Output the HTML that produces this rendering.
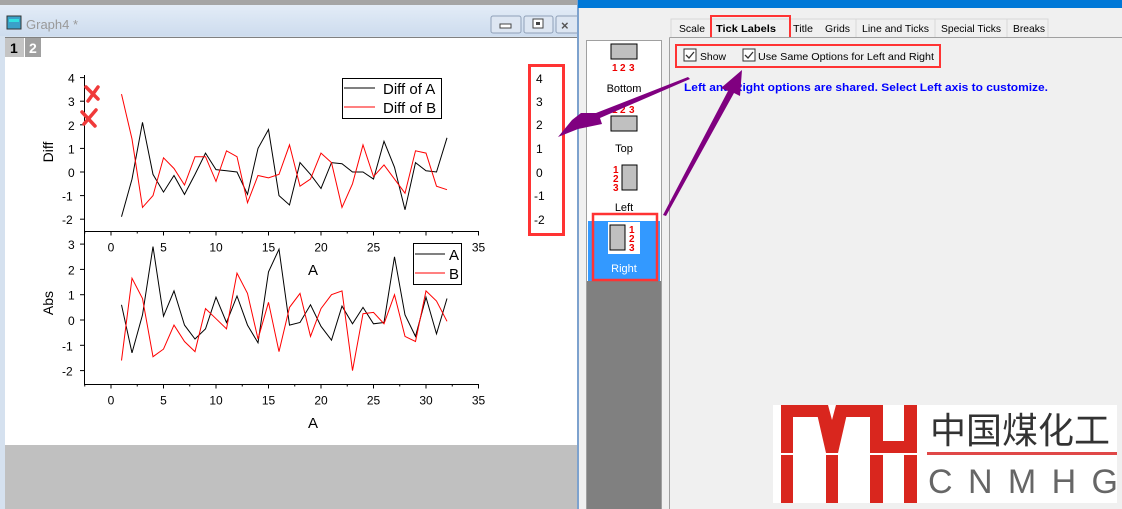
<!DOCTYPE html>
<html><head><meta charset="utf-8"><style>
html,body{margin:0;padding:0;width:1122px;height:509px;overflow:hidden;background:#f0f0f0;font-family:"Liberation Sans",sans-serif}
svg{position:absolute;left:0;top:0}
</style></head><body>
<svg width="1122" height="509" viewBox="0 0 1122 509" xmlns="http://www.w3.org/2000/svg" font-family="Liberation Sans, sans-serif">
<rect x="0" y="0" width="580" height="509" fill="#d5e1ef"/>
<rect x="0" y="0" width="580" height="5" fill="#a5a5a5"/>
<defs><linearGradient id="tb" x1="0" y1="0" x2="0" y2="1"><stop offset="0" stop-color="#e3ecf7"/><stop offset="1" stop-color="#cddcee"/></linearGradient></defs>
<rect x="0" y="5" width="580" height="31" fill="url(#tb)"/>
<rect x="7" y="16" width="14" height="13" fill="#3aa0c8" stroke="#333" stroke-width="1"/>
<rect x="9" y="19" width="10" height="3" fill="#30e0e0"/>
<text x="26" y="29" font-size="13" fill="#999">Graph4 *</text>
<rect x="491" y="16" width="30" height="17" rx="2" fill="#dde6f2" stroke="#8fa0b8"/>
<rect x="500" y="24" width="11" height="4" fill="#fff" stroke="#444"/>
<rect x="524" y="16" width="29" height="17" rx="2" fill="#dde6f2" stroke="#8fa0b8"/>
<rect x="533" y="19" width="10" height="9" fill="#fff" stroke="#444"/>
<rect x="536" y="22" width="4" height="3" fill="#444"/>
<rect x="556" y="16" width="24" height="17" rx="2" fill="#dde6f2" stroke="#8fa0b8"/>
<text x="561" y="30" font-size="13" font-weight="bold" fill="#555">×</text>
<rect x="5" y="37" width="573" height="408" fill="#fff"/>
<rect x="5" y="445" width="573" height="64" fill="#c0c0c0"/>
<rect x="5" y="37" width="573" height="1" fill="#808080"/>
<rect x="5" y="38" width="19" height="19" fill="#c4c4c4"/>
<text x="10" y="53" font-size="14" font-weight="bold" fill="#000">1</text>
<rect x="25" y="38" width="16" height="19" fill="#a0a0a0"/>
<text x="29" y="53" font-size="14" font-weight="bold" fill="#fff">2</text>

<g id="plots" font-size="12" fill="#000"></g>

<g stroke="#f03a3a" stroke-width="3.5" stroke-linecap="round">
<line x1="86" y1="87" x2="98" y2="99"/><line x1="98" y1="87" x2="88" y2="101"/>
<line x1="82" y1="112" x2="95" y2="126"/><line x1="96" y1="110" x2="84" y2="124"/>
</g>

<g font-size="12" fill="#000">
<text x="536" y="83">4</text><text x="536" y="106">3</text><text x="536" y="129">2</text><text x="536" y="153">1</text><text x="536" y="177">0</text><text x="534" y="200">-1</text><text x="534" y="224">-2</text>
</g>
<rect x="529.5" y="65.5" width="34" height="169" fill="none" stroke="#f33" stroke-width="3"/>

<rect x="578" y="0" width="544" height="509" fill="#f0f0f0"/>
<rect x="577" y="0" width="2" height="509" fill="#7da2ce"/>
<rect x="578" y="0" width="544" height="8" fill="#0078d7"/>
<g stroke="#d8d8d8" fill="none"><path d="M671 37V19H1048V37"/><path d="M856 19V37M935 19V37M1007 19V37"/></g>
<g font-size="10.5" fill="#000">
<text x="679" y="32" textLength="26" lengthAdjust="spacingAndGlyphs">Scale</text>
<text x="793" y="32" textLength="20" lengthAdjust="spacingAndGlyphs">Title</text>
<text x="825" y="32" textLength="25" lengthAdjust="spacingAndGlyphs">Grids</text>
<text x="862" y="32" textLength="67" lengthAdjust="spacingAndGlyphs">Line and Ticks</text>
<text x="941" y="32" textLength="60" lengthAdjust="spacingAndGlyphs">Special Ticks</text>
<text x="1013" y="32" textLength="32" lengthAdjust="spacingAndGlyphs">Breaks</text>
<text x="716" y="32" font-weight="bold" textLength="60" lengthAdjust="spacingAndGlyphs">Tick Labels</text>
</g>
<rect x="711" y="16" width="79" height="22" fill="none" stroke="#f33" stroke-width="2"/>
<path d="M669.5 37.5V509M669.5 37.5H1122" stroke="#a0a0a0" fill="none"/>
<rect x="672" y="38" width="450" height="471" fill="#f0f0f0"/>
<rect x="684" y="49" width="12" height="12" fill="#fff" stroke="#333"/>
<path d="M686 55l3 3 5-6" stroke="#333" fill="none" stroke-width="1.3"/>
<text x="700" y="60" font-size="10.5" textLength="26" lengthAdjust="spacingAndGlyphs">Show</text>
<rect x="743" y="49" width="12" height="12" fill="#fff" stroke="#333"/>
<path d="M745 55l3 3 5-6" stroke="#333" fill="none" stroke-width="1.3"/>
<text x="758" y="60" font-size="10.5" textLength="176" lengthAdjust="spacingAndGlyphs">Use Same Options for Left and Right</text>
<rect x="676" y="45" width="264" height="22" fill="none" stroke="#f33" stroke-width="2"/>
<text x="684" y="91" font-size="11" font-weight="bold" fill="#0000ff" textLength="364" lengthAdjust="spacingAndGlyphs">Left and Right options are shared. Select Left axis to customize.</text>

<rect x="586" y="40" width="76" height="469" fill="#a0a0a0"/>
<rect x="587" y="41" width="74" height="468" fill="#808080"/>
<rect x="587" y="41" width="74" height="240" fill="#fff"/>
<rect x="588" y="221" width="72" height="60" fill="#3399ff"/>
<g font-size="11" fill="#000" text-anchor="middle">
<text x="624" y="92">Bottom</text><text x="624" y="152">Top</text><text x="624" y="211">Left</text>
<text x="624" y="272" fill="#fff">Right</text>
</g>
<g fill="#c0c0c0" stroke="#000">
<rect x="611" y="44" width="26" height="15"/>
<rect x="611" y="116" width="26" height="15"/>
<rect x="622" y="165" width="15" height="25"/>
</g>
<rect x="608" y="222" width="32" height="32" fill="#fff"/>
<rect x="610" y="225" width="15" height="25" fill="#c0c0c0" stroke="#000"/>
<g font-size="10" font-weight="bold" fill="#e00">
<text x="612" y="71">1</text><text x="620" y="71">2</text><text x="629" y="71">3</text>
<text x="612" y="113">1</text><text x="620" y="113">2</text><text x="629" y="113">3</text>
<text x="613" y="173">1</text><text x="613" y="182">2</text><text x="613" y="191">3</text>
<text x="629" y="233">1</text><text x="629" y="242">2</text><text x="629" y="251">3</text>
</g>
<rect x="593" y="214" width="64" height="66" fill="none" stroke="#f33" stroke-width="2.5"/>

<g fill="#800080">
<polygon points="690,79 600,118 602,124 578,129 558,137 572,120 581,113 596,113 688,77"/>
<polygon points="663,215 728,91 721,88 742,70 740,96 734,93 666,216"/>
</g>

<rect x="773" y="405" width="344" height="98" fill="#fff"/>
<g fill="#d9261e">
<rect x="781" y="405" width="12" height="98"/>
<rect x="781" y="405" width="40" height="12"/>
<rect x="843" y="405" width="40" height="12"/>
<polygon points="815,405 828,405 832,420 836,405 849,405 838,453 826,453"/>
<rect x="826" y="455" width="12" height="48"/>
<rect x="870" y="405" width="13" height="98"/>
<rect x="870" y="441" width="47" height="12"/>
<rect x="904" y="405" width="13" height="98"/>
</g>
<rect x="773" y="453" width="148" height="2" fill="#fff"/>
<text x="1020" y="443" font-size="36" fill="#333" text-anchor="middle" font-family="Noto Sans CJK SC, sans-serif">中国煤化工</text>
<rect x="927" y="452" width="190" height="3" fill="#e04848"/>
<text x="928" y="493" font-size="34" fill="#666" textLength="190" lengthAdjust="spacing">CNMHG</text>
</svg>
<script>
(function(){
var g=document.getElementById('plots');var s='';
function X(x){return 111+10.5*x;}
var tb=[-1.9,-0.3,2.1,-0.1,-0.85,-0.15,-0.95,-0.1,0.8,0.1,0.05,0,-0.95,1,1.8,-1,-1.4,0.4,-0.1,-0.7,0.4,0.35,0,0,-0.3,1.3,0.2,-1.6,0.4,0.05,0,1.45];
var tr=[3.3,1.4,-1.5,-1,0.6,0.15,-0.55,0.65,0.65,-0.4,0.9,0.65,-1.3,-0.15,-0.25,-0.1,1.15,-0.6,-0.3,0.8,0.4,-1.5,-0.5,1.15,-0.2,0.3,-0.3,-0.9,0.9,0.8,-0.6,-0.75];
var bb=[0.6,-1.3,0.2,2.9,0.15,1.15,-0.2,-0.75,-0.35,0.9,-0.1,0.95,-0.2,-0.9,1.9,2.8,-0.2,-0.1,0.6,-0.25,-0.8,0.55,-0.15,0.5,-0.15,-0.1,2.5,0.2,-0.65,0.9,-0.55,0.85];
var br=[-1.6,1.65,0.85,-1.45,-1.15,-0.2,-0.85,-1.25,0.45,0.05,-0.35,1.85,1.05,-0.75,0.7,-1.25,0.5,1.05,-0.65,0.45,1,1.15,-2,0.25,0.3,-0.15,1,-0.65,-0.85,1.15,0.75,-0.05];
function pl(d,y0,k,c){var p=d.map(function(v,i){return X(i+1).toFixed(1)+','+(y0-k*v).toFixed(1)}).join(' ');return '<polyline points="'+p+'" fill="none" stroke="'+c+'" stroke-width="1"/>';}
s+=pl(tb,172,23.6,'#000')+pl(tr,172,23.6,'#f00')+pl(bb,320,25.3,'#000')+pl(br,320,25.3,'#f00');
function axes(top,bot,y0,k,vals){
 var a='<path d="M84.5 '+top+'V'+bot+'H479" stroke="#000" fill="none"/>';
 vals.forEach(function(v){var y=y0-k*v;a+='<path d="M80 '+y+'H84" stroke="#000"/><text x="'+(v<0?62:68)+'" y="'+(y+5)+'">'+v+'</text>';});
 for(var j=-1;j<=14;j++){var i=j*2.5;var x=X(i);var maj=(j%2==0);a+='<path d="M'+x+' '+bot+'V'+(bot+(maj?4:2))+'" stroke="#000"/>';if(maj&&i>=0)a+='<text x="'+x+'" y="'+(bot+20)+'" text-anchor="middle">'+i+'</text>';}
 return a;}
s+=axes(75,231.5,172,23.6,[4,3,2,1,0,-1,-2]);
s+=axes(232,384.5,320,25.3,[3,2,1,0,-1,-2]);
s+='<text x="313" y="275" font-size="15" text-anchor="middle">A</text><text x="313" y="428" font-size="15" text-anchor="middle">A</text>';
s+='<text transform="translate(53,152) rotate(-90)" font-size="14" text-anchor="middle">Diff</text>';
s+='<text transform="translate(53,303) rotate(-90)" font-size="14" text-anchor="middle">Abs</text>';
s+='<rect x="342.5" y="78.5" width="99" height="40" fill="#fff" stroke="#000"/><path d="M344 88H375" stroke="#000"/><path d="M344 107H375" stroke="#f00"/><text x="383" y="94" font-size="15">Diff of A</text><text x="383" y="113" font-size="15">Diff of B</text>';
s+='<rect x="413.5" y="243.5" width="48" height="41" fill="#fff" stroke="#000"/><path d="M415 254H445" stroke="#000"/><path d="M415 273H445" stroke="#f00"/><text x="449" y="260" font-size="15">A</text><text x="449" y="279" font-size="15">B</text>';
g.innerHTML=s;
})();
</script>
</body></html>
